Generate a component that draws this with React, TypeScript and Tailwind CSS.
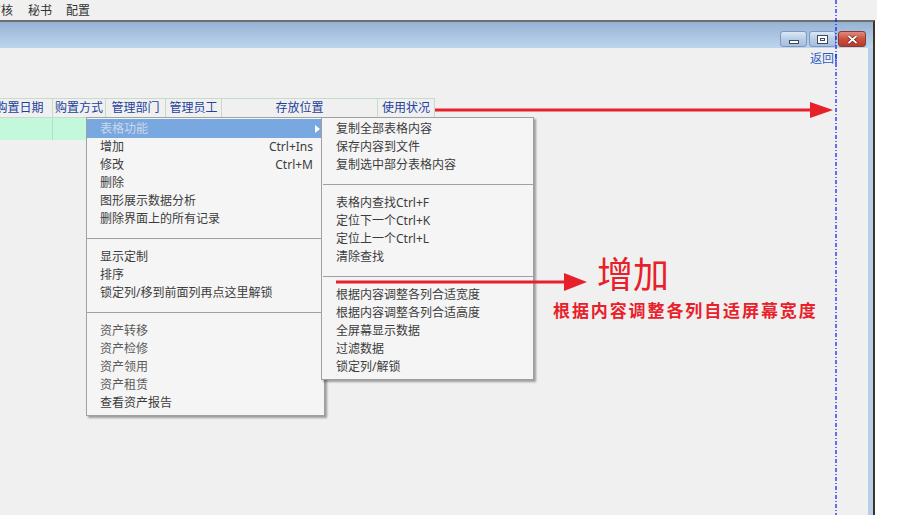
import React from "react";

const font = { fontFamily: '"Noto Sans", "Noto Sans CJK SC", sans-serif' };

type Item = { label: string; key?: string; dim?: boolean } | "sep";

const mainItems: Item[] = [
  { label: "增加", key: "Ctrl+Ins" },
  { label: "修改", key: "Ctrl+M" },
  { label: "删除" },
  { label: "图形展示数据分析" },
  { label: "删除界面上的所有记录" },
  "sep",
  { label: "显示定制" },
  { label: "排序" },
  { label: "锁定列/移到前面列再点这里解锁" },
  "sep",
  { label: "资产转移", dim: true },
  { label: "资产检修", dim: true },
  { label: "资产领用", dim: true },
  { label: "资产租赁", dim: true },
  { label: "查看资产报告" },
];

const subItems: Item[] = [
  { label: "复制全部表格内容" },
  { label: "保存内容到文件" },
  { label: "复制选中部分表格内容" },
  "sep",
  { label: "表格内查找Ctrl+F" },
  { label: "定位下一个Ctrl+K" },
  { label: "定位上一个Ctrl+L" },
  { label: "清除查找" },
  "sep",
  { label: "根据内容调整各列合适宽度" },
  { label: "根据内容调整各列合适高度" },
  { label: "全屏幕显示数据" },
  { label: "过滤数据" },
  { label: "锁定列/解锁" },
];

const columns = [
  { title: "购置日期", w: "w-[66px]" },
  { title: "购置方式", w: "w-[53px]" },
  { title: "管理部门", w: "w-[60px]" },
  { title: "管理员工", w: "w-[56px]" },
  { title: "存放位置", w: "w-[156px]" },
  { title: "使用状况", w: "w-[57px]" },
];

function MenuRows({ items }: { items: Item[] }) {
  return (
    <>
      {items.map((it, i) =>
        it === "sep" ? (
          <div key={i} className="h-[20px] pt-[10px]">
            <div className="h-px bg-[#a0a0a0]" />
          </div>
        ) : (
          <div
            key={i}
            className={`flex h-[18px] items-center justify-between pl-[13px] pr-[11px] ${
              it.dim ? "text-[#5a5a5a]" : "text-[#3c3c3c]"
            }`}
          >
            <span>{it.label}</span>
            {it.key && <span>{it.key}</span>}
          </div>
        )
      )}
    </>
  );
}

function WinButton({ kind }: { kind: "min" | "max" | "close" }) {
  if (kind === "close") {
    return (
      <div className="flex h-[16px] w-[28px] items-center justify-center rounded-[3px] border border-[#8a3a30] bg-gradient-to-b from-[#e08a7c] via-[#c9503e] to-[#b83a28]">
        <svg width="11" height="9" viewBox="0 0 11 9">
          <path d="M1.5 1 L9.5 8 M9.5 1 L1.5 8" stroke="#5a1a10" strokeWidth="3" />
          <path d="M1.5 1 L9.5 8 M9.5 1 L1.5 8" stroke="#fff" strokeWidth="1.8" />
        </svg>
      </div>
    );
  }
  return (
    <div className="flex h-[16px] w-[27px] items-center justify-center rounded-[3px] border border-[#7d98bb] bg-gradient-to-b from-[#dbe7f5] via-[#b9cde6] to-[#a7bfdd]">
      {kind === "min" ? (
        <div className="mt-[5px] h-[4px] w-[10px] border border-[#3b4a60] bg-white" />
      ) : (
        <div className="flex h-[9px] w-[11px] items-center justify-center border border-[#3b4a60] bg-white">
          <div className="h-[3px] w-[5px] border border-[#3b4a60]" />
        </div>
      )}
    </div>
  );
}

export default function App() {
  return (
    <div className="relative h-[515px] w-[901px] overflow-hidden bg-white text-[12px]" style={font}>
      {/* menu bar */}
      <div className="flex h-[20px] w-[877px] items-center bg-[#f0f0f0] pt-[2px] text-[#333]">
        <span className="ml-[-11px]">审核</span>
        <span className="ml-[15px]">秘书</span>
        <span className="ml-[14px]">配置</span>
      </div>

      {/* window */}
      <div className="flex h-[495px] w-[875px] flex-col border-r-2 border-t-2 border-r-[#3e3424] border-t-[#6e6e6e]">
        <div className="flex h-[26px] items-start justify-end gap-[2px] bg-gradient-to-b from-[#97b3d4] to-[#bdd5ed] pr-[7px] pt-[9px]">
          <WinButton kind="min" />
          <WinButton kind="max" />
          <WinButton kind="close" />
        </div>
        <div className="flex flex-1">
          <div className="flex flex-1 flex-col bg-[#f0f0f0]">
            <div className="flex h-[20px] justify-end pr-[31px] pt-[4px]">
              <div className="w-[27px] overflow-hidden whitespace-nowrap leading-[14px] text-[#2b5fc6]">返回Esc</div>
            </div>
            {/* table */}
            <div className="ml-[-13px] mt-[30px] flex flex-col">
              <div className="flex h-[20px]">
                {columns.map((c) => (
                  <div
                    key={c.title}
                    className={`${c.w} flex items-center justify-center border-b border-r border-t border-[#c6dcc6] text-[#23409c]`}
                  >
                    {c.title}
                  </div>
                ))}
              </div>
              <div className="flex h-[22px]">
                {columns.map((c) => (
                  <div key={c.title} className={`${c.w} border-r border-[#b8dcc4] bg-[#c4f8dc]`} />
                ))}
              </div>
            </div>
          </div>
          <div className="w-[5px] bg-[#b7cfe9]" />
        </div>
      </div>

      {/* dashed guide */}
      <svg className="absolute left-[835px] top-0" width="2" height="515">
        <line x1="1" y1="0" x2="1" y2="515" stroke="#1010f0" strokeWidth="1.2" strokeDasharray="4 2 1 2" />
      </svg>

      {/* arrow to the right edge */}
      <svg className="absolute left-[435px] top-[100px]" width="400" height="20">
        <line x1="0" y1="10" x2="380" y2="10" stroke="#e8202a" strokeWidth="3" />
        <polygon points="375,2 398,10 375,18" fill="#e8202a" />
      </svg>

      {/* main context menu */}
      <div className="absolute left-[86px] top-[117px] w-[239px] border border-[#a0a0a0] bg-[#f5f5f5] pb-[3px] pt-px shadow-[2px_2px_2px_rgba(0,0,0,0.35)]">
        <div className="flex h-[19px] items-center justify-between bg-[#79a8e0] pl-[13px] pr-[4px] text-[#ccd7e8]">
          <span>表格功能</span>
          <svg width="5" height="8" viewBox="0 0 5 8">
            <polygon points="0,0 5,4 0,8" fill="#ffffff" />
          </svg>
        </div>
        <MenuRows items={mainItems} />
      </div>

      {/* submenu */}
      <div className="absolute left-[321px] top-[117px] w-[213px] border border-[#a0a0a0] bg-[#f5f5f5] pb-[3px] pt-[2px] shadow-[2px_2px_2px_rgba(0,0,0,0.35)]">
        <div className="pl-px">
          <MenuRows items={subItems} />
        </div>
      </div>

      {/* second arrow */}
      <svg className="absolute left-[336px] top-[272px]" width="252" height="20">
        <line x1="0" y1="10" x2="232" y2="10" stroke="#e8202a" strokeWidth="3" />
        <polygon points="228,1 251,10 228,19" fill="#e8202a" />
      </svg>

      {/* annotation */}
      <div className="absolute left-[597px] top-[257px] text-[36px] leading-none text-[#e8202a]">增加</div>
      <div className="absolute left-[553px] top-[302px] text-[17px] font-bold leading-none tracking-[1.9px] text-[#e8202a]">
        根据内容调整各列自适屏幕宽度
      </div>
    </div>
  );
}
